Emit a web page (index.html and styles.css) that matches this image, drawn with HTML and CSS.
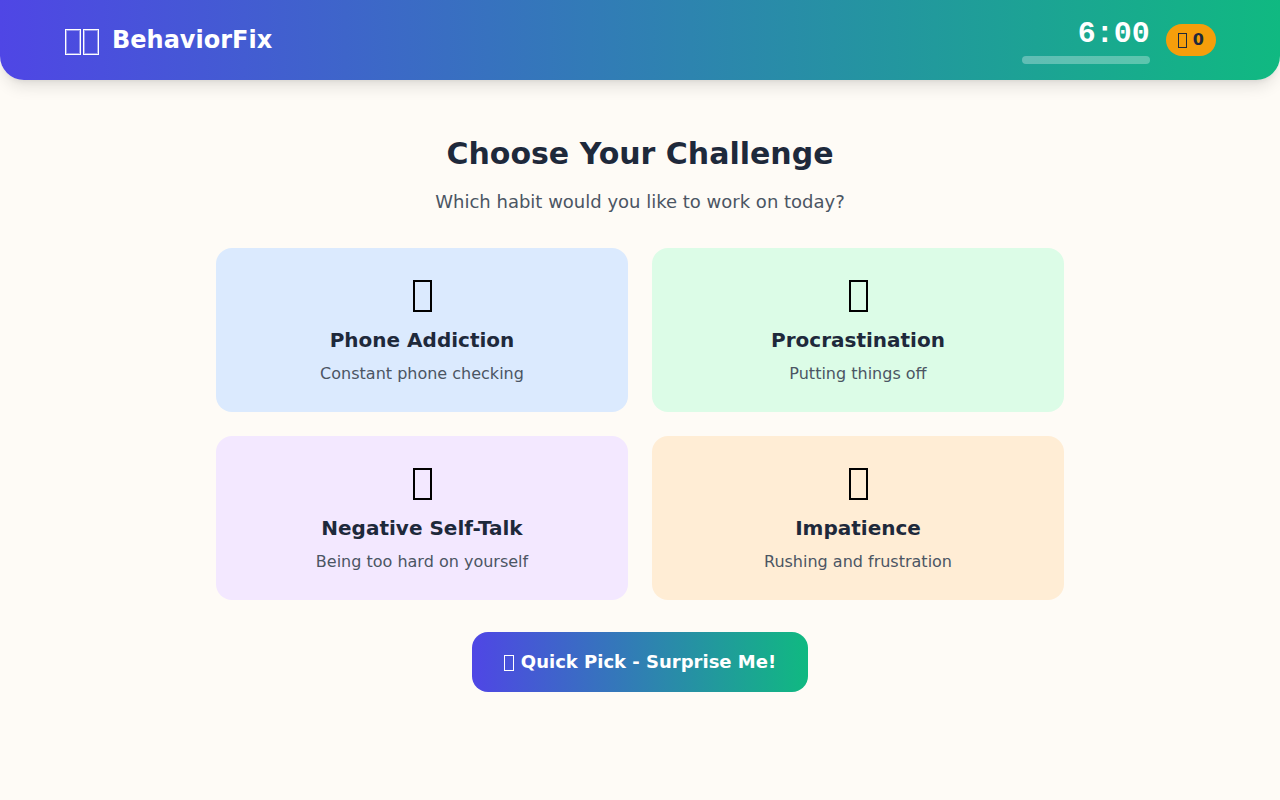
FILE: index.html
```html
<!DOCTYPE html>
<html lang="en">
<head>
<meta charset="utf-8">
<meta name="viewport" content="width=device-width, initial-scale=1">
<title>BehaviorFix</title>
<link rel="stylesheet" href="styles.css">
</head>
<body>
<header class="header">
  <div class="brand">
    <span class="brand-icon" aria-hidden="true"><span class="box box-medium"></span><span class="box box-medium"></span></span>
    <h1 class="brand-name">BehaviorFix</h1>
  </div>
  <div class="status">
    <div class="timer">
      <div class="time">6:00</div>
      <div class="track"></div>
    </div>
    <div class="badge"><span class="box box-tiny" aria-hidden="true"></span>0</div>
  </div>
</header>
<main class="main">
  <h2 class="title">Choose Your Challenge</h2>
  <p class="subtitle">Which habit would you like to work on today?</p>
  <div class="grid">
    <button class="card blue" type="button">
      <span class="card-icon" aria-hidden="true"><span class="box box-large"></span></span>
      <span class="card-title">Phone Addiction</span>
      <span class="card-text">Constant phone checking</span>
    </button>
    <button class="card green" type="button">
      <span class="card-icon" aria-hidden="true"><span class="box box-large"></span></span>
      <span class="card-title">Procrastination</span>
      <span class="card-text">Putting things off</span>
    </button>
    <button class="card purple" type="button">
      <span class="card-icon" aria-hidden="true"><span class="box box-large"></span></span>
      <span class="card-title">Negative Self-Talk</span>
      <span class="card-text">Being too hard on yourself</span>
    </button>
    <button class="card orange" type="button">
      <span class="card-icon" aria-hidden="true"><span class="box box-large"></span></span>
      <span class="card-title">Impatience</span>
      <span class="card-text">Rushing and frustration</span>
    </button>
  </div>
  <button class="quick" type="button"><span class="box box-small" aria-hidden="true"></span>Quick Pick - Surprise Me!</button>
</main>
</body>
</html>
```
FILE: styles.css
```css
* { box-sizing: border-box; margin: 0; }
body {
  min-height: 100vh;
  background: #fefbf6;
  color: #1e293b;
  font: 16px/24px "DejaVu Sans", sans-serif;
}
button { border: 0; font: inherit; color: inherit; cursor: pointer; }
.header {
  display: flex;
  align-items: center;
  justify-content: space-between;
  padding: 16px 64px;
  border-radius: 0 0 24px 24px;
  background: linear-gradient(90deg, #4f46e5, #10b981);
  color: #fff;
  box-shadow: 0 10px 15px -3px rgba(0,0,0,.1), 0 4px 6px -4px rgba(0,0,0,.1);
}

/* Outlined box icons */
.box { flex: none; border: 1px solid currentColor; }
.box-tiny { width: 9px; height: 15px; }
.box-small { width: 10px; height: 16px; }
.box-medium { width: 16px; height: 26px; box-shadow: inset 0 0 0 1px rgba(255,255,255,.4); }
.box-large { width: 19px; height: 32px; border-width: 2px; }

.brand { display: flex; align-items: center; gap: 12px; }
.brand-icon { display: flex; gap: 2px; padding: 4px 1px 0; }
.brand-name { font-size: 24px; line-height: 32px; font-weight: 700; }
.status { display: flex; align-items: center; gap: 16px; }
.timer { width: 128px; text-align: right; }
.time { font: 700 30px/36px "Liberation Mono", monospace; }
.track { height: 8px; margin-top: 4px; border-radius: 4px; background: rgba(255,255,255,.3); }
.badge {
  display: flex;
  align-items: center;
  gap: 6px;
  padding: 4px 12px;
  border-radius: 16px;
  background: #f59e0b;
  color: #1e293b;
  font-weight: 700;
}
.badge .box { margin-top: 1px; }
.quick .box { margin-top: 2px; }
.main { max-width: 896px; margin: 0 auto; padding: 56px 24px; text-align: center; }
.title { font-size: 30px; line-height: 36px; font-weight: 700; }
.subtitle { margin-top: 16px; font-size: 18px; line-height: 28px; color: #4b5563; }
.grid { display: grid; grid-template-columns: repeat(2, 1fr); gap: 24px; margin: 32px 0; }
.card { display: flex; flex-direction: column; align-items: center; padding: 24px; border: 2px solid transparent; border-radius: 16px; }
.card-icon { display: flex; align-items: flex-end; height: 38px; color: #000; margin-bottom: 14px; }
.card-title { font-size: 20px; line-height: 28px; font-weight: 700; margin-bottom: 8px; }
.card-text { color: #4b5563; }
.blue { background-color: #dbeafe; }
.green { background-color: #dcfce7; }
.purple { background-color: #f3e8ff; }
.orange { background-color: #ffedd5; }
.quick {
  display: flex;
  align-items: center;
  gap: 7px;
  margin: 0 auto;
  padding: 16px 32px;
  border-radius: 16px;
  background: linear-gradient(90deg, #4f46e5, #10b981);
  color: #fff;
  font-size: 18px;
  line-height: 28px;
  font-weight: 700;
}
```
